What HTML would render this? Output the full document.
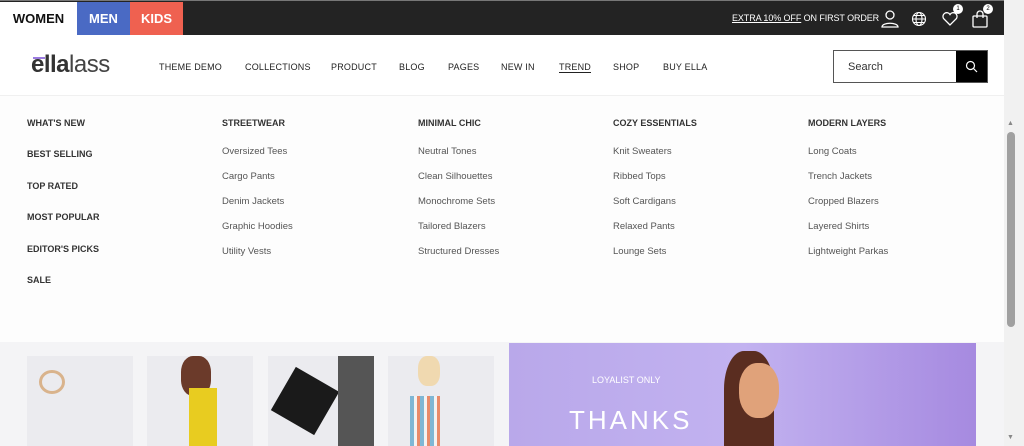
<!DOCTYPE html>
<html><head><style>
*{margin:0;padding:0;box-sizing:border-box}
body{width:1024px;height:446px;overflow:hidden;background:#fff;font-family:"Liberation Sans",sans-serif;position:relative}
.top{position:absolute;left:0;top:0;width:1004px;height:35px;background:#232323;border-top:1px solid #777}
.tab{position:absolute;top:1px;height:34px;font-weight:bold;font-size:13px;line-height:34px;text-align:center}
.hdr{position:absolute;left:0;top:35px;width:1004px;height:60px;background:#fff}
.nav{position:absolute;top:62px;font-size:9px;color:#222;letter-spacing:.2px}
.mega{position:absolute;left:0;top:95px;width:1004px;height:247px;background:#fdfdfd;border-top:1px solid #f0f0f0}
.h{position:absolute;font-size:9px;font-weight:bold;color:#333}
.l{position:absolute;font-size:9.5px;color:#555}
.bot{position:absolute;left:0;top:342px;width:1004px;height:104px;background:#f4f4f6}
.sb{position:absolute;left:1004px;top:0;width:20px;height:446px;background:#f1f1f1}
</style></head><body>
<div class="top">
<div class="tab" style="left:0;width:77px;background:#fff;color:#111">WOMEN</div>
<div class="tab" style="left:77px;width:53px;background:#4a6ac4;color:#fff">MEN</div>
<div class="tab" style="left:130px;width:53px;background:#ef6150;color:#fff">KIDS</div>
<div style="position:absolute;left:732px;width:144px;top:12px;font-size:9px;color:#fff;white-space:nowrap;letter-spacing:-.1px"><u>EXTRA 10% OFF</u> ON FIRST ORDER</div>
<svg style="position:absolute;left:880px;top:9px" width="20" height="18" fill="none" stroke="#fff" stroke-width="1.3"><circle cx="10" cy="5" r="4"/><path d="M2 17c0-5 16-5 16 0z"/></svg>
<svg style="position:absolute;left:911px;top:10px" width="16" height="16" fill="none" stroke="#fff" stroke-width="1.1"><circle cx="8" cy="8" r="6.5"/><ellipse cx="8" cy="8" rx="3" ry="6.5"/><path d="M1.5 8h13M3 4.5h10M3 11.5h10"/></svg>
<svg style="position:absolute;left:941px;top:10px" width="18" height="16" fill="none" stroke="#fff" stroke-width="1.3"><path d="M9 14L2.5 7.5a3.5 3.5 0 0 1 6.5-4 3.5 3.5 0 0 1 6.5 4z"/></svg>
<div style="position:absolute;left:953px;top:3px;width:10px;height:10px;border-radius:50%;background:#fff;color:#000;font-size:6px;text-align:center;line-height:10px">1</div>
<svg style="position:absolute;left:971px;top:9px" width="18" height="18" fill="none" stroke="#fff" stroke-width="1.3"><rect x="2" y="6" width="14" height="11" rx="1"/><path d="M6 8V4a3 3 0 0 1 6 0v4"/></svg>
<div style="position:absolute;left:983px;top:3px;width:10px;height:10px;border-radius:50%;background:#fff;color:#000;font-size:6px;text-align:center;line-height:10px">2</div>
</div>
<div class="hdr">
<div style="position:absolute;left:33px;top:22px;width:12px;height:2px;background:#9b7be0"></div>
<div style="position:absolute;left:31px;top:16px;font-size:24px;color:#333;letter-spacing:-.5px"><b>ella</b><span style="font-weight:normal;color:#444">lass</span></div>
</div>
<div class="nav" style="left:159px">THEME DEMO</div>
<div class="nav" style="left:245px">COLLECTIONS</div>
<div class="nav" style="left:331px">PRODUCT</div>
<div class="nav" style="left:399px">BLOG</div>
<div class="nav" style="left:448px">PAGES</div>
<div class="nav" style="left:501px">NEW IN</div>
<div class="nav" style="left:559px;border-bottom:1px solid #222">TREND</div>
<div class="nav" style="left:613px">SHOP</div>
<div class="nav" style="left:663px">BUY ELLA</div>
<div style="position:absolute;left:833px;top:50px;width:155px;height:33px;border:1px solid #555;background:#fff">
<div style="position:absolute;left:14px;top:10px;font-size:11px;color:#333">Search</div>
<div style="position:absolute;left:122px;top:0;width:31px;height:31px;background:#000"><svg style="position:absolute;left:9px;top:9px" width="13" height="13" fill="none" stroke="#fff" stroke-width="1.2"><circle cx="5.5" cy="5.5" r="4"/><path d="M8.5 8.5l3.5 3.5"/></svg></div>
</div>
<div class="mega">
<div class="h" style="left:27px;top:22px">WHAT'S NEW</div>
<div class="h" style="left:27px;top:53px">BEST SELLING</div>
<div class="h" style="left:27px;top:85px">TOP RATED</div>
<div class="h" style="left:27px;top:116px">MOST POPULAR</div>
<div class="h" style="left:27px;top:148px">EDITOR'S PICKS</div>
<div class="h" style="left:27px;top:179px">SALE</div>
<div class="h" style="left:222px;top:22px">STREETWEAR</div>
<div class="l" style="left:222px;top:50px">Oversized Tees</div><div class="l" style="left:222px;top:75px">Cargo Pants</div><div class="l" style="left:222px;top:100px">Denim Jackets</div><div class="l" style="left:222px;top:125px">Graphic Hoodies</div><div class="l" style="left:222px;top:150px">Utility Vests</div>
<div class="h" style="left:418px;top:22px">MINIMAL CHIC</div>
<div class="l" style="left:418px;top:50px">Neutral Tones</div><div class="l" style="left:418px;top:75px">Clean Silhouettes</div><div class="l" style="left:418px;top:100px">Monochrome Sets</div><div class="l" style="left:418px;top:125px">Tailored Blazers</div><div class="l" style="left:418px;top:150px">Structured Dresses</div>
<div class="h" style="left:613px;top:22px">COZY ESSENTIALS</div>
<div class="l" style="left:613px;top:50px">Knit Sweaters</div><div class="l" style="left:613px;top:75px">Ribbed Tops</div><div class="l" style="left:613px;top:100px">Soft Cardigans</div><div class="l" style="left:613px;top:125px">Relaxed Pants</div><div class="l" style="left:613px;top:150px">Lounge Sets</div>
<div class="h" style="left:808px;top:22px">MODERN LAYERS</div>
<div class="l" style="left:808px;top:50px">Long Coats</div><div class="l" style="left:808px;top:75px">Trench Jackets</div><div class="l" style="left:808px;top:100px">Cropped Blazers</div><div class="l" style="left:808px;top:125px">Layered Shirts</div><div class="l" style="left:808px;top:150px">Lightweight Parkas</div>
</div>
<div class="bot">
<div style="position:absolute;left:27px;top:14px;width:106px;height:90px;background:#ebebef"><div style="position:absolute;left:12px;top:14px;width:26px;height:24px;border:3px solid #d9b38c;border-radius:50%"></div></div>
<div style="position:absolute;left:147px;top:14px;width:106px;height:90px;background:#ebebef"><div style="position:absolute;left:34px;top:0;width:30px;height:40px;background:#6b3a2a;border-radius:40%"></div><div style="position:absolute;left:42px;top:32px;width:28px;height:58px;background:#e8cc20"></div></div>
<div style="position:absolute;left:268px;top:14px;width:106px;height:90px;background:#ebebef"><div style="position:absolute;left:12px;top:20px;width:50px;height:50px;background:#1a1a1a;transform:rotate(30deg)"></div><div style="position:absolute;left:70px;top:0;width:36px;height:90px;background:#555"></div></div>
<div style="position:absolute;left:388px;top:14px;width:106px;height:90px;background:#ebebef"><div style="position:absolute;left:30px;top:0;width:22px;height:30px;background:#f0d9b0;border-radius:40%"></div><div style="position:absolute;left:22px;top:40px;width:30px;height:50px;background:repeating-linear-gradient(90deg,#7fb7d5 0 4px,#f3f3f3 4px 7px,#e98b6a 7px 10px)"></div></div>
<div style="position:absolute;left:509px;top:1px;width:467px;height:103px;background:linear-gradient(90deg,#b9a8ea,#c2b2f0 50%,#a68ae0)">
<div style="position:absolute;left:83px;top:32px;font-size:9px;color:#fff">LOYALIST ONLY</div>
<div style="position:absolute;left:60px;top:62px;font-size:26px;color:#fff;letter-spacing:3px">THANKS</div>
<div style="position:absolute;left:215px;top:8px;width:50px;height:95px;background:#5a2d20;border-radius:40% 40% 0 0"></div>
<div style="position:absolute;left:230px;top:20px;width:40px;height:55px;background:#e0a27a;border-radius:45%"></div>
</div>
</div>
<div class="sb"><div style="position:absolute;left:3px;top:120px;font-size:7px;color:#888">▲</div><div style="position:absolute;left:3px;top:132px;width:8px;height:195px;background:#a0a0a0;border-radius:4px"></div><div style="position:absolute;left:3px;top:434px;font-size:7px;color:#888">▼</div></div>
</body></html>
